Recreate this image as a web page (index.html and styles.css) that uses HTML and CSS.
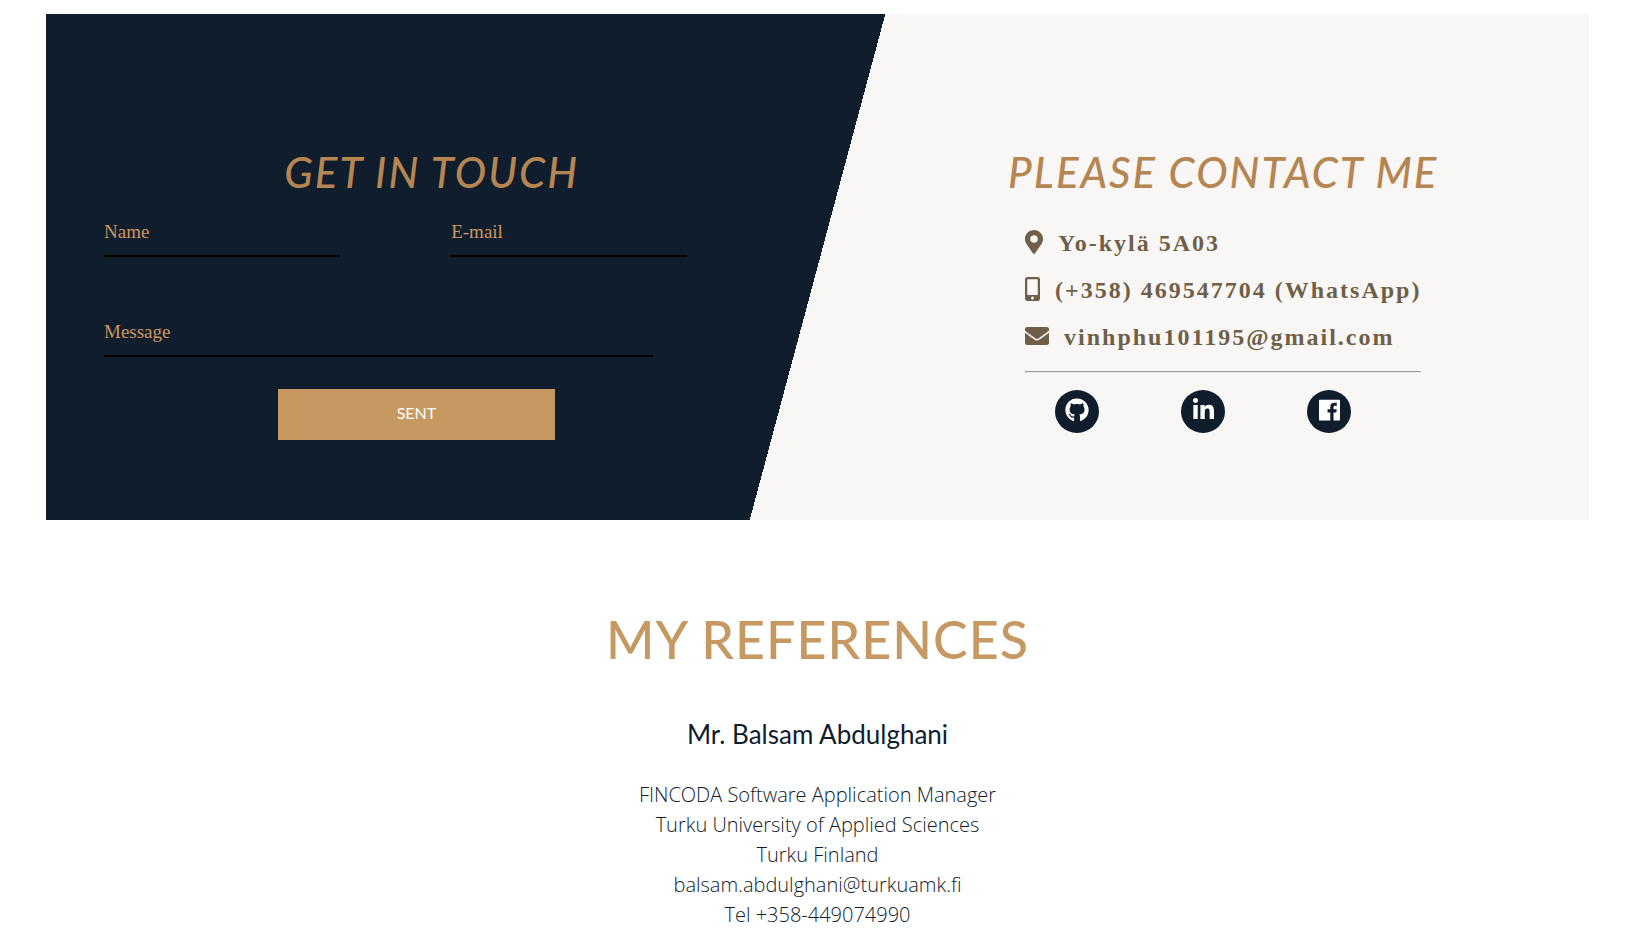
FILE: index.html
```html
<!DOCTYPE html>
<html lang="en">
<head>
<meta charset="utf-8">
<title>Contact</title>
<meta name="viewport" content="width=device-width, initial-scale=1">
<link rel="stylesheet" href="styles.css">
</head>
<body>
<main class="page">
  <section class="contact">
    <div class="contact-form">
      <h2 class="contact-title">GET IN TOUCH</h2>
      <form class="form">
        <div class="form-row">
          <input class="field" type="text" name="name" placeholder="Name" aria-label="Name">
          <input class="field" type="email" name="email" placeholder="E-mail" aria-label="E-mail">
        </div>
        <input class="field field-wide" type="text" name="message" placeholder="Message" aria-label="Message">
        <button class="submit" type="submit">SENT</button>
      </form>
    </div>
    <div class="contact-info">
      <h2 class="contact-title">PLEASE CONTACT ME</h2>
      <div class="details">
        <ul class="detail-list">
          <li class="detail">
            <svg class="icon" width="18" height="24" viewBox="0 0 384 512" aria-hidden="true"><path d="M172 502C27 291 0 269 0 192 0 86 86 0 192 0s192 86 192 192c0 77-27 99-172 310-10 13-30 13-40 0zM192 272a80 80 0 1 0 0-160 80 80 0 0 0 0 160z"/></svg>
            <span class="detail-text">Yo-kylä 5A03</span>
          </li>
          <li class="detail">
            <svg class="icon" width="15" height="24" viewBox="0 0 320 512" aria-hidden="true"><path d="M272 0H48C22 0 0 22 0 48v416c0 26 22 48 48 48h224c26 0 48-22 48-48V48c0-26-22-48-48-48zM160 480a32 32 0 1 1 0-64 32 32 0 0 1 0 64zm112-108c0 7-5 12-12 12H60c-7 0-12-5-12-12V60c0-7 5-12 12-12h200c7 0 12 5 12 12z"/></svg>
            <span class="detail-text">(+358) 469547704 (WhatsApp)</span>
          </li>
          <li class="detail">
            <svg class="icon" width="24" height="24" viewBox="0 0 512 512" aria-hidden="true"><path d="M502.300 190.800c3.900-3.100 9.700-.2 9.700 4.700V400c0 26.500-21.500 48-48 48H48c-26.500 0-48-21.500-48-48V195.600c0-5 5.700-7.800 9.700-4.700 22.400 17.400 52.100 39.500 154.100 113.600 21.100 15.400 56.700 47.800 92.200 47.600 35.700.3 72-32.800 92.300-47.600 102-74.100 131.600-96.300 154-113.700zM256 320c23.200.4 56.600-29.200 73.400-41.400 132.700-96.300 142.800-104.700 173.400-128.700 5.800-4.500 9.200-11.500 9.200-18.900v-19c0-26.500-21.500-48-48-48H48c-26.500 0-48 21.500-48 48v19c0 7.400 3.400 14.300 9.200 18.900 30.600 23.900 40.700 32.400 173.400 128.700 16.800 12.200 50.200 41.800 73.400 41.400z"/></svg>
            <span class="detail-text">vinhphu101195@gmail.com</span>
          </li>
        </ul>
        <hr class="rule">
        <nav class="social" aria-label="Social profiles">
          <a class="social-link" href="#github" aria-label="GitHub">
            <svg width="24" height="24" viewBox="0 0 496 512" aria-hidden="true"><path d="M165.900 397.400c0 2-2.300 3.600-5.200 3.600-3.300.3-5.600-1.300-5.600-3.600 0-2 2.300-3.600 5.200-3.600 3-.3 5.600 1.300 5.600 3.600zm-31.100-4.500c-.7 2 1.300 4.300 4.300 4.900 2.600 1 5.600 0 6.200-2s-1.300-4.300-4.300-5.200c-2.600-.7-5.500.3-6.200 2.300zm44.200-1.700c-2.900.7-4.900 2.600-4.600 4.900.3 2 2.900 3.300 5.900 2.600 2.900-.7 4.900-2.600 4.600-4.600-.3-1.900-3-3.200-5.900-2.900zM244.800 8C106.100 8 0 113.300 0 252c0 110.900 69.800 205.800 169.500 239.200 12.800 2.300 17.300-5.600 17.300-12.100 0-6.200-.3-40.400-.3-61.400 0 0-70 15-84.700-29.800 0 0-11.400-29.100-27.800-36.600 0 0-22.900-15.700 1.600-15.400 0 0 24.900 2 38.600 25.800 21.900 38.600 58.600 27.500 72.900 20.900 2.300-16 8.800-27.100 16-33.700-55.900-6.200-112.300-14.300-112.300-110.500 0-27.500 7.600-41.300 23.600-58.900-2.600-6.500-11.100-33.300 2.600-67.900 20.900-6.500 69 27 69 27 20-5.600 41.500-8.500 62.800-8.500s42.800 2.900 62.800 8.500c0 0 48.100-33.600 69-27 13.700 34.700 5.200 61.400 2.600 67.900 16 17.700 25.800 31.500 25.800 58.900 0 96.500-58.900 104.200-114.800 110.500 9.200 7.900 17 22.900 17 46.400 0 33.700-.3 75.400-.3 83.600 0 6.500 4.600 14.400 17.300 12.100C428.200 457.800 496 362.900 496 252 496 113.300 383.500 8 244.800 8z"/></svg>
          </a>
          <a class="social-link" href="#linkedin" aria-label="LinkedIn">
            <svg width="21" height="24" viewBox="0 0 448 512" aria-hidden="true"><path d="M100.300 448H7.400V148.900h92.900zM53.800 108.100C24.100 108.100 0 83.500 0 53.800a53.800 53.800 0 0 1 107.600 0c0 29.700-24.100 54.300-53.800 54.300zM447.900 448h-92.700V302.400c0-34.700-.7-79.200-48.300-79.200-48.300 0-55.700 37.700-55.700 76.700V448h-92.800V148.900h89.100v40.800h1.300c12.400-23.500 42.700-48.300 87.900-48.300 94 0 111.300 61.900 111.300 142.300V448z"/></svg>
          </a>
          <a class="social-link" href="#facebook" aria-label="Facebook">
            <svg width="21" height="24" viewBox="0 0 448 512" aria-hidden="true"><path d="M424 35H24C11 35 0 46 0 59v398c0 13 11 24 24 24h216V309h-58v-68h58v-50c0-58 36-89 88-89 25 0 46 2 52 3v61h-36c-28 0-34 14-34 33v42h68l-9 68h-59v172h114c13 0 24-11 24-24V59c0-13-11-24-24-24z"/></svg>
          </a>
        </nav>
      </div>
    </div>
  </section>

  <section class="references">
    <h1 class="references-title">MY REFERENCES</h1>
    <h3 class="person">Mr. Balsam Abdulghani</h3>
    <p class="person-info">FINCODA Software Application Manager<br>Turku University of Applied Sciences<br>Turku Finland<br>balsam.abdulghani@turkuamk.fi<br>Tel +358-449074990</p>
  </section>
</main>
</body>
</html>
```
FILE: styles.css
```css
:root {
  --navy: #101d2c;
  --gold: #c69963;
  --bronze: #b58552;
  --paper: #f8f7f5;
  --brown: #6f5f48;
}

* {
  box-sizing: border-box;
}

body {
  margin: 0;
  background: #fff;
  color: var(--navy);
  font-family: Lato, sans-serif;
}

.page {
  padding: 14px 55px 0 46px;
}

.contact {
  display: grid;
  grid-template-columns: 1fr 1fr;
  padding: 132px 0 80px;
  background: linear-gradient(105deg, var(--navy) 50%, var(--paper) 50%);
}

.contact-title {
  margin: 0;
  color: var(--bronze);
  font-size: 42px;
  font-style: italic;
  font-weight: 500;
  line-height: 52px;
  letter-spacing: 2px;
  text-align: center;
}

.form {
  width: 90%;
  margin: 14px 0 0 58px;
}

.form-row {
  display: grid;
  grid-template-columns: 1fr 1fr;
  margin-bottom: 55px;
}

.field {
  display: block;
  width: 68%;
  height: 45px;
  padding: 0 0 3px;
  border: 0;
  border-bottom: 2px solid #000;
  background: transparent;
  color: var(--gold);
  font-family: "Liberation Serif", serif;
  font-size: 19px;
}

.field::placeholder {
  color: #cf965f;
  opacity: 1;
}

.field-wide {
  width: 79%;
}

.submit {
  display: block;
  width: 40%;
  height: 51px;
  margin: 32px 0 0 25%;
  padding: 0 0 4px;
  border: 0;
  background: var(--gold);
  color: #fff;
  font-family: Lato, sans-serif;
  font-size: 16px;
}

.contact-info {
  padding-left: 40px;
}

.details {
  width: fit-content;
  margin: 20px auto 0;
}

.detail-list {
  margin: 0;
  padding: 0;
  list-style: none;
}

.detail {
  display: flex;
  align-items: center;
  gap: 15px;
  height: 47px;
  color: var(--brown);
  font-family: "Liberation Serif", serif;
  font-size: 24px;
  font-weight: 700;
  letter-spacing: 2px;
}

.detail-text {
  padding-top: 4px;
}

.icon {
  flex: none;
  fill: currentColor;
}

.rule {
  margin: 12px 0 17px;
}

.social {
  display: flex;
  gap: 82px;
  padding-left: 30px;
}

.social-link {
  display: flex;
  align-items: center;
  justify-content: center;
  width: 44px;
  height: 43px;
  padding-bottom: 4px;
  border-radius: 50%;
  background: var(--navy);
}

.social-link svg {
  fill: #fff;
}

.references {
  padding-top: 88px;
  text-align: center;
}

.references-title {
  margin: 0;
  color: var(--gold);
  font-size: 52px;
  font-weight: 500;
  line-height: 62px;
  letter-spacing: 1px;
}

.person {
  margin: 47px 0 0;
  font-size: 26px;
  font-weight: 400;
  line-height: 34px;
}

.person-info {
  margin: 29px 0 0;
  font-family: "Open Sans", sans-serif;
  font-size: 20px;
  font-weight: 300;
  line-height: 30px;
}
```
